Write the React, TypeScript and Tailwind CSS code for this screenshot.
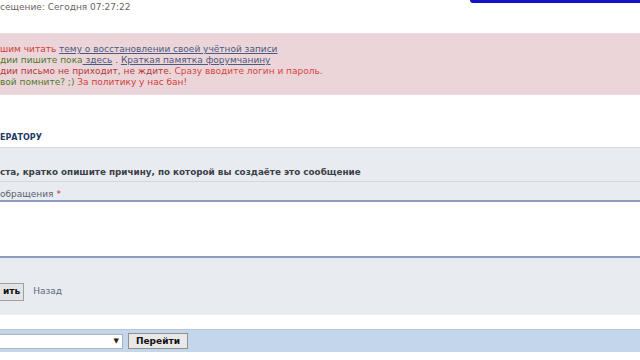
import React from 'react';

export default function App() {
  return (
    <div className="w-[640px] h-[360px] overflow-hidden bg-white text-[9px] leading-[11px]" style={{ fontFamily: '"DejaVu Sans", Verdana, sans-serif' }}>
      {/* top line */}
      <div className="relative h-[33px]">
        <div className="absolute right-0 top-0 w-[170px] h-[3px] bg-[#1414c4] rounded-bl-[3px]" />
        <div className="pt-[2px] text-[#666] text-[9px]">сещение: Сегодня 07:27:22</div>
      </div>

      {/* warning box */}
      <div className="h-[62px] bg-[#ebd5d8] border-y border-[#eadfe0] pt-[10px]">
        <div className="text-[#d23c3c]">
          шим читать <a className="text-[#4a5a80] underline">тему о восстановлении своей учётной записи</a>
        </div>
        <div className="text-[#4f7a2c]">
          дии пишите пока<a className="text-[#4a5a80] underline"> здесь</a> <span className="text-[#4a5a80]">.</span>{' '}
          <a className="text-[#4a5a80] underline">Краткая памятка форумчанину</a>
        </div>
        <div className="text-[#b43a3a]">
          дии письмо не приходит, не ждите. <span className="text-[#d84444]">Сразу вводите логин и пароль.</span>
        </div>
        <div className="text-[#4f7a2c]">
          вой помните? ;) <span className="text-[#d23c3c]">За политику у нас бан!</span>
        </div>
      </div>

      {/* section header */}
      <div className="h-[52px] flex items-end pb-[4px]">
        <div className="font-bold text-[#1d3a66] text-[8px]">ЕРАТОРУ</div>
      </div>

      {/* form */}
      <div className="bg-[#e8ebf0] border-t border-[#d5dae3]">
        <div className="h-[34px] flex items-end pb-[3px] border-b border-[#d3d8e0]">
          <div className="font-bold text-[#3a3f48] text-[8.8px]">ста, кратко опишите причину, по которой вы создаёте это сообщение</div>
        </div>
        <div className="h-[18px] flex items-end pb-0 text-[#5a6070] text-[9px]">
          обращения <span className="text-[#d03030] ml-[3px]">*</span>
        </div>
        <div className="h-[58px] bg-white border-y-2 border-[#8c9cc0]" />
        <div className="h-[57px] flex items-center gap-[9px] pt-[10px]">
          <button className="h-[18px] px-[3px] bg-[#e4e4e4] border border-[#a0a0a0] border-l-0 font-bold text-[#111] text-[9px] leading-none">ить</button>
          <a className="text-[#5a6a80] text-[9px]">Назад</a>
        </div>
      </div>

      <div className="h-[14px]" />

      {/* jump bar */}
      <div className="h-[23px] bg-[#c4d7ea] border-t border-[#b5c8de] flex items-center gap-[5px]">
        <div className="w-[123px] h-[15px] bg-white border border-[#a8b4c4] border-l-0 flex items-center justify-end pr-[3px]">
          <span className="text-[7px] text-[#222]">▼</span>
        </div>
        <button className="w-[60px] h-[16px] bg-[#e8e8e8] border border-[#909090] font-bold text-[#111] text-[9px] leading-none">Перейти</button>
      </div>
    </div>
  );
}
